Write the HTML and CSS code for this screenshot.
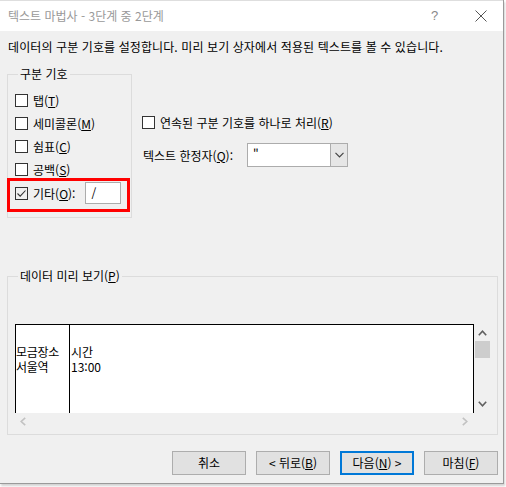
FILE: index.html
```html
<!DOCTYPE html>
<html lang="ko">
<head>
<meta charset="utf-8">
<title>텍스트 마법사</title>
<link rel="stylesheet" href="styles.css">
</head>
<body>
<div class="dialog">
  <div class="titlebar">
    <span class="title">텍스트 마법사 - 3단계 중 2단계</span>
    <span class="help">?</span>
    <span class="close">
      <svg width="12" height="12" viewBox="0 0 12 12"><path d="M0.5 0.5 L11.5 11.5 M11.5 0.5 L0.5 11.5" stroke="#555" stroke-width="1" fill="none"/></svg>
    </span>
  </div>
  <div class="content">
    <div class="desc">데이터의 구분 기호를 설정합니다. 미리 보기 상자에서 적용된 텍스트를 볼 수 있습니다.</div>
    <div class="toprow">
      <fieldset class="group delim">
        <legend>구분 기호</legend>
        <div class="row"><span class="cb"></span><span>탭(<u>T</u>)</span></div>
        <div class="row"><span class="cb"></span><span>세미콜론(<u>M</u>)</span></div>
        <div class="row"><span class="cb"></span><span>쉼표(<u>C</u>)</span></div>
        <div class="row"><span class="cb"></span><span>공백(<u>S</u>)</span></div>
        <div class="row other">
          <span class="cb checked"><svg width="11" height="11" viewBox="0 0 11 11"><path d="M1.5 5.5 L4.2 8.2 L9.5 2.5" stroke="#333" stroke-width="1.1" fill="none"/></svg></span>
          <span>기타(<u>O</u>):</span>
          <span class="otherinput">/</span>
          <span class="highlight"></span>
        </div>
      </fieldset>
      <div class="options">
        <div class="row opt1"><span class="cb"></span><span>연속된 구분 기호를 하나로 처리(<u>R</u>)</span></div>
        <div class="row opt2">
          <span class="qlabel">텍스트 한정자(<u>Q</u>):</span>
          <span class="combo"><span class="comboval">"</span><span class="combobtn"><svg width="9" height="6" viewBox="0 0 9 6"><path d="M0.5 0.8 L4.5 4.8 L8.5 0.8" stroke="#444" stroke-width="1.2" fill="none"/></svg></span></span>
        </div>
      </div>
    </div>
    <fieldset class="group preview">
      <legend>데이터 미리 보기(<u>P</u>)</legend>
      <div class="pgrid">
        <div class="parea">
          <div class="pcol c1"><div class="pline">모금장소</div><div class="pline">서울역</div></div>
          <div class="pcol c2"><div class="pline">시간</div><div class="pline">13:00</div></div>
        </div>
        <div class="vscroll">
          <svg class="up" width="9" height="6" viewBox="0 0 9 6"><path d="M0.8 5.2 L4.5 1.2 L8.2 5.2" stroke="#606060" stroke-width="1.6" fill="none"/></svg>
          <span class="thumb"></span>
          <span class="vspace"></span>
          <svg class="down" width="9" height="6" viewBox="0 0 9 6"><path d="M0.8 0.8 L4.5 4.8 L8.2 0.8" stroke="#606060" stroke-width="1.6" fill="none"/></svg>
        </div>
        <div class="hscroll">
          <svg width="6" height="9" viewBox="0 0 6 9"><path d="M5.2 0.8 L1.2 4.5 L5.2 8.2" stroke="#c2c2c2" stroke-width="1.6" fill="none"/></svg>
          <svg width="6" height="9" viewBox="0 0 6 9"><path d="M0.8 0.8 L4.8 4.5 L0.8 8.2" stroke="#c2c2c2" stroke-width="1.6" fill="none"/></svg>
        </div>
        <div class="corner"></div>
      </div>
    </fieldset>
    <div class="buttons">
      <button class="btn">취소</button>
      <button class="btn">&lt; 뒤로(<u>B</u>)</button>
      <button class="btn default">다음(<u>N</u>) &gt;</button>
      <button class="btn">마침(<u>F</u>)</button>
    </div>
  </div>
</div>
</body>
</html>
```
FILE: styles.css
```css
html, body {
  margin: 0;
  padding: 0;
}
body {
  background: #ffffff;
  font-family: "Noto Sans CJK KR", "Noto Sans", sans-serif;
  font-size: 12px;
  color: #000;
  width: 506px;
  height: 487px;
  overflow: hidden;
}
.dialog {
  width: 503px;
  height: 483px;
  background: #f0f0f0;
  border-right: 1px solid #9a9a9a;
  border-bottom: 1px solid #9a9a9a;
  box-shadow: 1px 2px 2px rgba(0,0,0,0.18);
  display: flex;
  flex-direction: column;
}
.titlebar {
  height: 30px;
  background: #fff;
  border-top: 1px solid #dedede;
  display: flex;
  align-items: center;
  padding-left: 8px;
  color: #999;
  font-size: 12px;
  line-height: 14px;
}
.title {
  flex: 1;
}
.help {
  width: 12px;
  color: #888;
  font-family: "Liberation Sans", sans-serif;
  font-size: 13px;
  margin-right: 32px;
}
.close {
  display: flex;
  margin-right: 16px;
}
.content {
  flex: 1;
  display: flex;
  flex-direction: column;
}
.desc {
  margin-top: 8px;
  padding-left: 8px;
  line-height: 16px;
  height: 16px;
  white-space: nowrap;
  letter-spacing: 0.1px;
}
.toprow {
  display: flex;
  align-items: flex-start;
  margin-top: 12px;
}
.group {
  margin: 0 0 0 7px;
  padding: 0;
  border: 1px solid #dcdcdc;
  min-width: 0;
}
.group legend {
  margin-left: 3px;
  padding: 0 2px;
  line-height: 14px;
  height: 14px;
  white-space: nowrap;
}
.delim {
  width: 125px;
  box-sizing: border-box;
  padding: 8px 0 12px 7px;
}
.row {
  display: flex;
  align-items: center;
  height: 23px;
  white-space: nowrap;
}
.cb {
  width: 13px;
  height: 13px;
  box-sizing: border-box;
  border: 1px solid #333;
  background: #fff;
  margin-right: 5px;
  flex: none;
  display: flex;
  align-items: center;
  justify-content: center;
}
.cb.checked {
  background: #f0f0f0;
}
.cb svg {
  display: block;
}
.other {
  height: 24px;
  position: relative;
}
.otherinput {
  margin-left: 10px;
  width: 36px;
  height: 22px;
  box-sizing: border-box;
  border: 1px solid #acacac;
  background: #fff;
  padding-left: 5px;
  line-height: 20px;
}
.highlight {
  position: absolute;
  left: -8px;
  top: -3px;
  width: 123px;
  height: 34px;
  box-sizing: border-box;
  border: 3px solid #ff0000;
}
.options {
  margin-left: 10px;
  display: flex;
  flex-direction: column;
}
.opt1 {
  margin-top: 45px;
  height: 20px;
}
.opt2 {
  margin-top: 11px;
  height: 24px;
}
.qlabel {
  margin-left: 1px;
  width: 104px;
}
.combo {
  width: 101px;
  height: 24px;
  box-sizing: border-box;
  border: 1px solid #acacac;
  background: #fff;
  display: flex;
}
.comboval {
  flex: 1;
  padding-left: 5px;
  line-height: 20px;
}
.combobtn {
  width: 16px;
  background: #e6e6e6;
  border-left: 1px solid #acacac;
  display: flex;
  align-items: center;
  justify-content: center;
}
.preview {
  width: 491px;
  height: 166px;
  box-sizing: border-box;
  margin-top: 51px;
  padding: 41px 0 0 7px;
}
.pgrid {
  display: grid;
  grid-template-columns: 459px 16px;
  grid-template-rows: 89px 16px;
}
.parea {
  background: #fff;
  border: 1px solid #000;
  border-bottom: none;
  display: flex;
}
.pcol {
  padding-top: 19px;
  white-space: nowrap;
  overflow: hidden;
}
.pline {
  height: 15px;
  font-size: 12px;
  line-height: 15px;
}
.c1 {
  width: 53px;
  border-right: 1px solid #000;
  letter-spacing: -0.3px;
}
.c2 {
  padding-left: 1px;
}
.vscroll {
  display: flex;
  flex-direction: column;
  align-items: center;
}
.vscroll .up {
  margin-top: 6px;
}
.thumb {
  margin-top: 5px;
  width: 15px;
  height: 17px;
  background: #cdcdcd;
}
.vspace {
  flex: 1;
}
.vscroll .down {
  margin-bottom: 6px;
}
.hscroll {
  display: flex;
  align-items: center;
  justify-content: space-between;
  padding: 0 6px 0 5px;
}
.buttons {
  display: flex;
  justify-content: flex-end;
  gap: 10px;
  margin-top: 16px;
  padding-right: 5px;
}
.btn {
  width: 74px;
  height: 24px;
  box-sizing: border-box;
  border: 1px solid #adadad;
  background: #e1e1e1;
  font-family: "Noto Sans CJK KR", "Noto Sans", sans-serif;
  font-size: 12px;
  line-height: 14px;
  padding: 0;
  color: #000;
}
.btn.default {
  border: 2px solid #0078d7;
}
```
